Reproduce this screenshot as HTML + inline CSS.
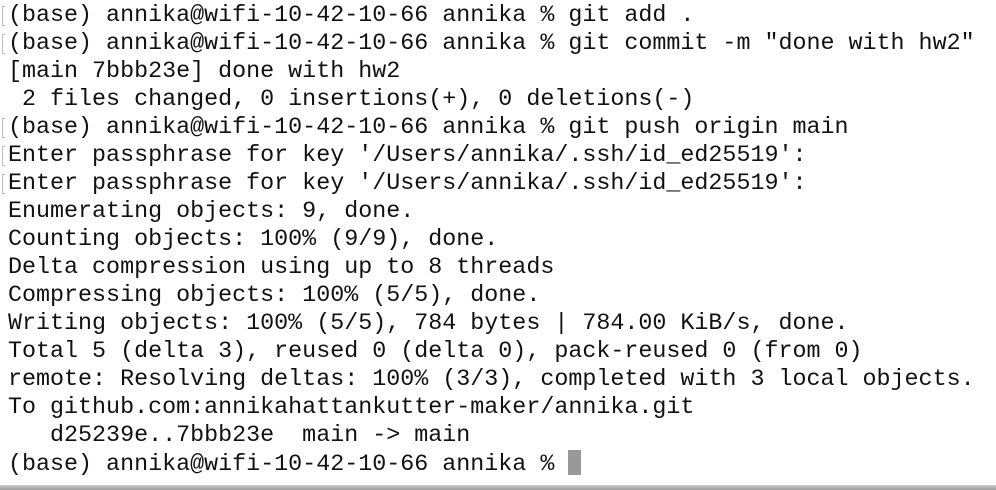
<!DOCTYPE html>
<html><head><style>
html,body{margin:0;padding:0;background:#fff;width:996px;height:490px;overflow:hidden;position:relative}
.t{position:absolute;left:8px;top:2px;font-family:"Liberation Mono",monospace;font-size:23.35px;line-height:28px;color:#111;white-space:pre}
.b{position:absolute;left:2px;width:3px;height:20px;border:1px solid #bbb;border-right:none;box-sizing:border-box}
.cur{display:inline-block;width:13px;height:25px;background:#999;vertical-align:-5px}
.bot{position:absolute;left:0;top:485px;width:996px;height:5px;background:linear-gradient(#ccc,#9a9a9a)}
</style></head><body>
<div class="b" style="top:6px"></div>
<div class="b" style="top:34px"></div>
<div class="b" style="top:118px"></div>
<div class="b" style="top:146px"></div>
<div class="b" style="top:174px"></div>
<div class="t">(base) annika@wifi-10-42-10-66 annika % git add .
(base) annika@wifi-10-42-10-66 annika % git commit -m "done with hw2"
[main 7bbb23e] done with hw2
 2 files changed, 0 insertions(+), 0 deletions(-)
(base) annika@wifi-10-42-10-66 annika % git push origin main
Enter passphrase for key '/Users/annika/.ssh/id_ed25519':
Enter passphrase for key '/Users/annika/.ssh/id_ed25519':
Enumerating objects: 9, done.
Counting objects: 100% (9/9), done.
Delta compression using up to 8 threads
Compressing objects: 100% (5/5), done.
Writing objects: 100% (5/5), 784 bytes | 784.00 KiB/s, done.
Total 5 (delta 3), reused 0 (delta 0), pack-reused 0 (from 0)
remote: Resolving deltas: 100% (3/3), completed with 3 local objects.
To github.com:annikahattankutter-maker/annika.git
   d25239e..7bbb23e  main -&gt; main
(base) annika@wifi-10-42-10-66 annika % <span class="cur"></span></div>
<div class="bot"></div>
</body></html>
